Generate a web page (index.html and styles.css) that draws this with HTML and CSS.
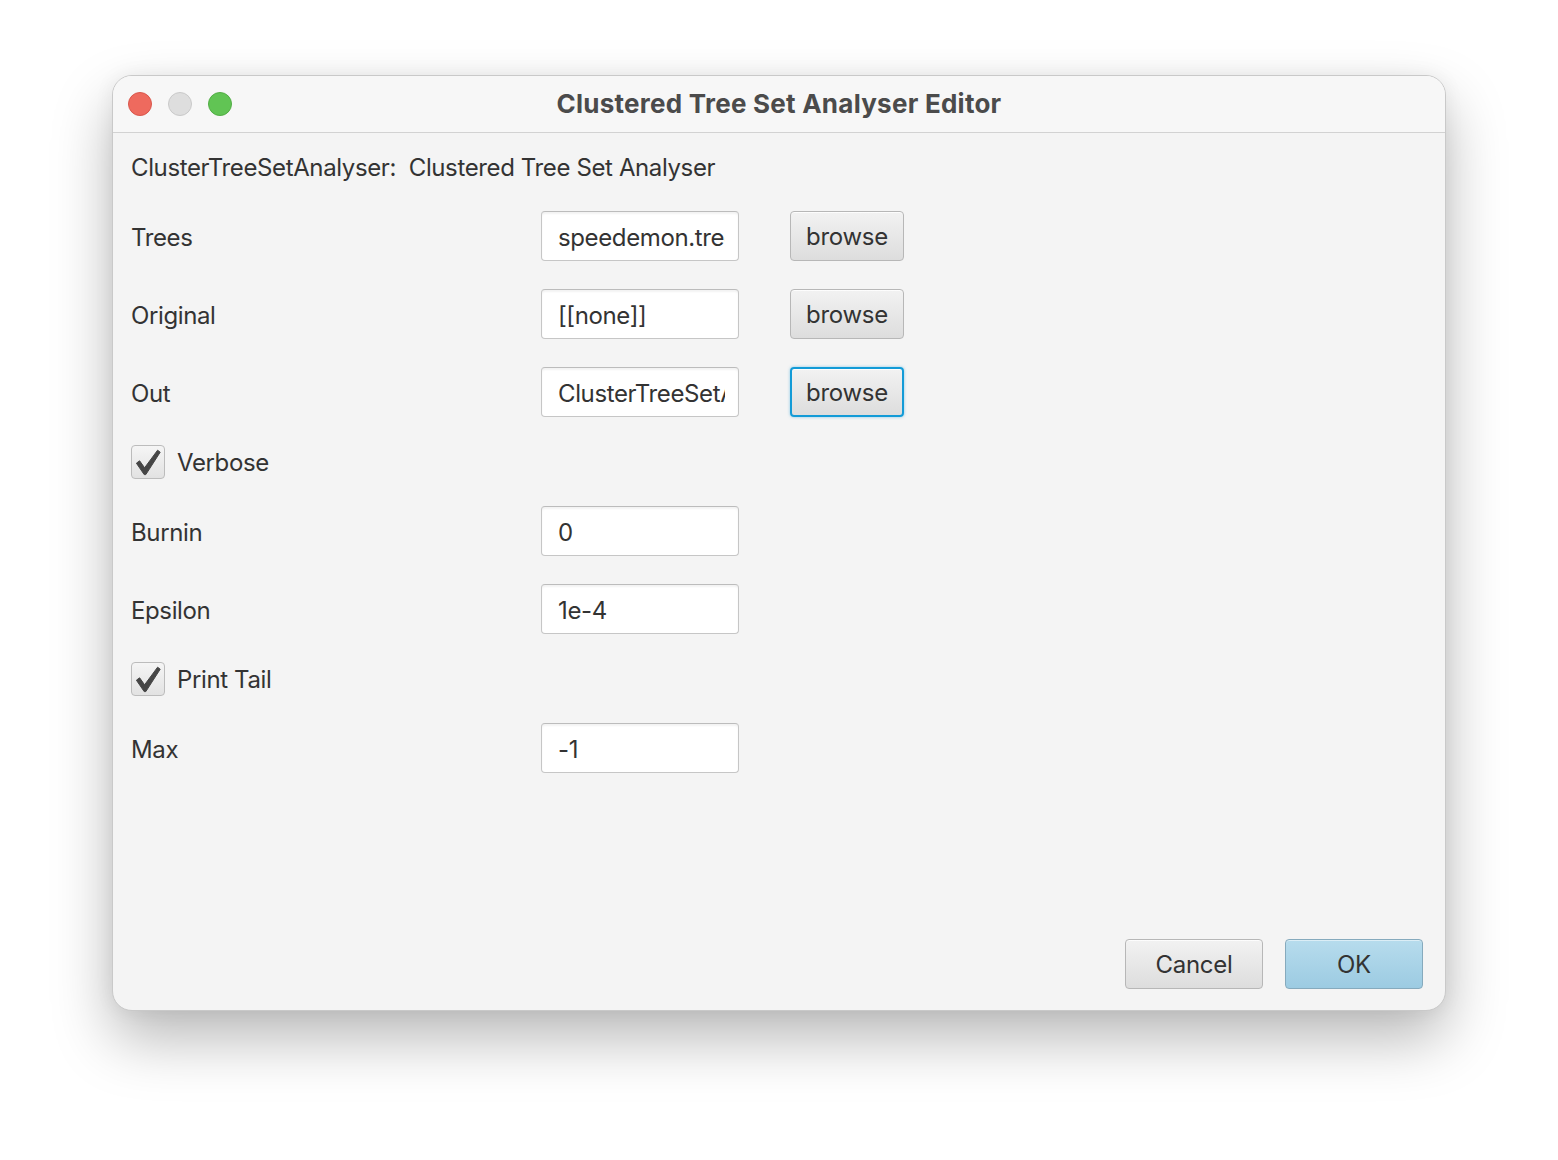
FILE: index.html
```html
<!DOCTYPE html>
<html>
<head>
<meta charset="utf-8">
<link rel="stylesheet" href="styles.css">
</head>
<body>
<div class="window">
  <div class="titlebar">
    <div class="lights">
      <span class="light red"></span>
      <span class="light gray"></span>
      <span class="light green"></span>
    </div>
    <div class="title">Clustered Tree Set Analyser Editor</div>
  </div>
  <div class="content">
    <div class="form">
      <div class="header full">ClusterTreeSetAnalyser:&nbsp;&nbsp;Clustered Tree Set Analyser</div>

      <div class="label">Trees</div>
      <input class="field" type="text" readonly value="speedemon.trees">
      <div class="btn browse">browse</div>

      <div class="label">Original</div>
      <input class="field" type="text" readonly value="[[none]]">
      <div class="btn browse">browse</div>

      <div class="label">Out</div>
      <input class="field" type="text" readonly value="ClusterTreeSetAnalyser.log">
      <div class="btn browse focused">browse</div>

      <div class="check full"><span class="box"><svg viewBox="0 0 34 34" width="34" height="34"><path d="M5.4 18.2 L8.6 15.8 L13.6 22.8 L26.6 5.2 L29.2 7.2 L14.8 29.6 L13.2 29.6 Z" fill="#454545" stroke="#454545" stroke-width="1" stroke-linejoin="round"/></svg></span><span class="check-label">Verbose</span></div>

      <div class="label">Burnin</div>
      <input class="field" type="text" readonly value="0">
      <div class="spacer"></div>

      <div class="label">Epsilon</div>
      <input class="field" type="text" readonly value="1e-4">
      <div class="spacer"></div>

      <div class="check full"><span class="box"><svg viewBox="0 0 34 34" width="34" height="34"><path d="M5.4 18.2 L8.6 15.8 L13.6 22.8 L26.6 5.2 L29.2 7.2 L14.8 29.6 L13.2 29.6 Z" fill="#454545" stroke="#454545" stroke-width="1" stroke-linejoin="round"/></svg></span><span class="check-label">Print Tail</span></div>

      <div class="label">Max</div>
      <input class="field" type="text" readonly value="-1">
      <div class="spacer"></div>
    </div>
    <div class="footer">
      <div class="btn wide">Cancel</div>
      <div class="btn wide ok">OK</div>
    </div>
  </div>
</div>
</body>
</html>
```
FILE: styles.css
```css
html, body {
  margin: 0;
  padding: 0;
  background: #ffffff;
}
body {
  width: 1558px;
  height: 1160px;
  overflow: hidden;
  font-family: "Inter", "Liberation Sans", sans-serif;
  color: #333333;
}
.window {
  margin-left: 112px;
  margin-top: 75px;
  width: 1334px;
  height: 936px;
  box-sizing: border-box;
  border: 1px solid #c9c9c9;
  border-radius: 20px;
  background: #f4f4f4;
  overflow: hidden;
  display: flex;
  flex-direction: column;
  box-shadow: 0 28px 60px rgba(0, 0, 0, 0.28), 0 0 20px rgba(0, 0, 0, 0.06);
}
.titlebar {
  height: 56px;
  flex: 0 0 56px;
  background: #f7f7f7;
  border-bottom: 1px solid #d2d2d2;
  display: flex;
  align-items: center;
  position: relative;
}
.lights {
  display: flex;
  gap: 16px;
  padding-left: 15px;
}
.light {
  width: 24px;
  height: 24px;
  border-radius: 50%;
  box-sizing: border-box;
}
.red { background: #ee6a5e; border: 1px solid #d9574c; }
.gray { background: #dedede; border: 1px solid #c9c9c9; }
.green { background: #61c454; border: 1px solid #52ad45; }
.title {
  position: absolute;
  left: 0;
  right: 0;
  top: 0;
  bottom: 2px;
  display: flex;
  align-items: center;
  justify-content: center;
  font-weight: 700;
  font-size: 26px;
  letter-spacing: 0.25px;
  color: #4b4b4b;
}
.content {
  flex: 1;
  display: flex;
  flex-direction: column;
  padding: 20px 22px 21px 18px;
}
.form {
  display: grid;
  grid-template-columns: 410px 198px 164px;
  row-gap: 28px;
  grid-template-rows: 30px 50px 50px 50px 33px 50px 50px 33px 50px;
  align-items: center;
  letter-spacing: -0.38px;
}
.full { grid-column: 1 / -1; }
.header {
  font-size: 24px;
  color: #333;
  height: 30px;
  line-height: 30px;
}
.label {
  font-size: 24px;
  color: #333;
  line-height: 30px;
  padding-top: 4px;
}
.field {
  width: 198px;
  height: 50px;
  margin: 0;
  box-sizing: border-box;
  background: #ffffff;
  border: 1px solid #c6c6c6;
  border-top-color: #bcbcbc;
  border-radius: 4px;
  box-shadow: inset 0 2px 2px rgba(0, 0, 0, 0.05);
  font-family: "Inter", "Liberation Sans", sans-serif;
  font-size: 24px;
  letter-spacing: -0.38px;
  padding: 2px 13px 0 16px;
  color: #333;
  outline: none;
}
.btn {
  height: 50px;
  box-sizing: border-box;
  border: 1px solid #b7b7b7;
  border-radius: 4px;
  background: linear-gradient(#f2f2f2, #dddddd);
  box-shadow: inset 0 1px 0 rgba(255, 255, 255, 0.8);
  font-size: 24px;
  line-height: 48px;
  text-align: center;
  color: #333;
  letter-spacing: -0.3px;
}
.browse {
  margin-left: 51px;
  width: 114px;
  justify-self: start;
  padding-top: 1px;
}
.focused {
  border: 2px solid #139bd7;
  line-height: 46px;
  box-shadow: 0 0 3px rgba(19, 155, 215, 0.5), inset 0 1px 0 rgba(255, 255, 255, 0.8);
}
.spacer { height: 1px; }
.check {
  display: flex;
  align-items: center;
  height: 33px;
}
.box {
  width: 34px;
  height: 34px;
  box-sizing: border-box;
  border: 1px solid #bcbcbc;
  border-radius: 4px;
  background: linear-gradient(#f5f5f5, #e2e2e2);
  position: relative;
  flex: 0 0 34px;
}
.box svg {
  display: block;
  position: absolute;
  left: -1px;
  top: -1px;
}
.check-label {
  font-size: 24px;
  color: #333;
  margin-left: 12px;
  padding-top: 2px;
}
.footer {
  margin-top: auto;
  display: flex;
  justify-content: flex-end;
  gap: 22px;
}
.wide {
  width: 138px;
  padding-top: 1px;
}
.ok {
  background: linear-gradient(#b7dced, #9ccbe2);
  border-color: #86aabd;
  box-shadow: inset 0 1px 0 rgba(255, 255, 255, 0.5);
}
```
